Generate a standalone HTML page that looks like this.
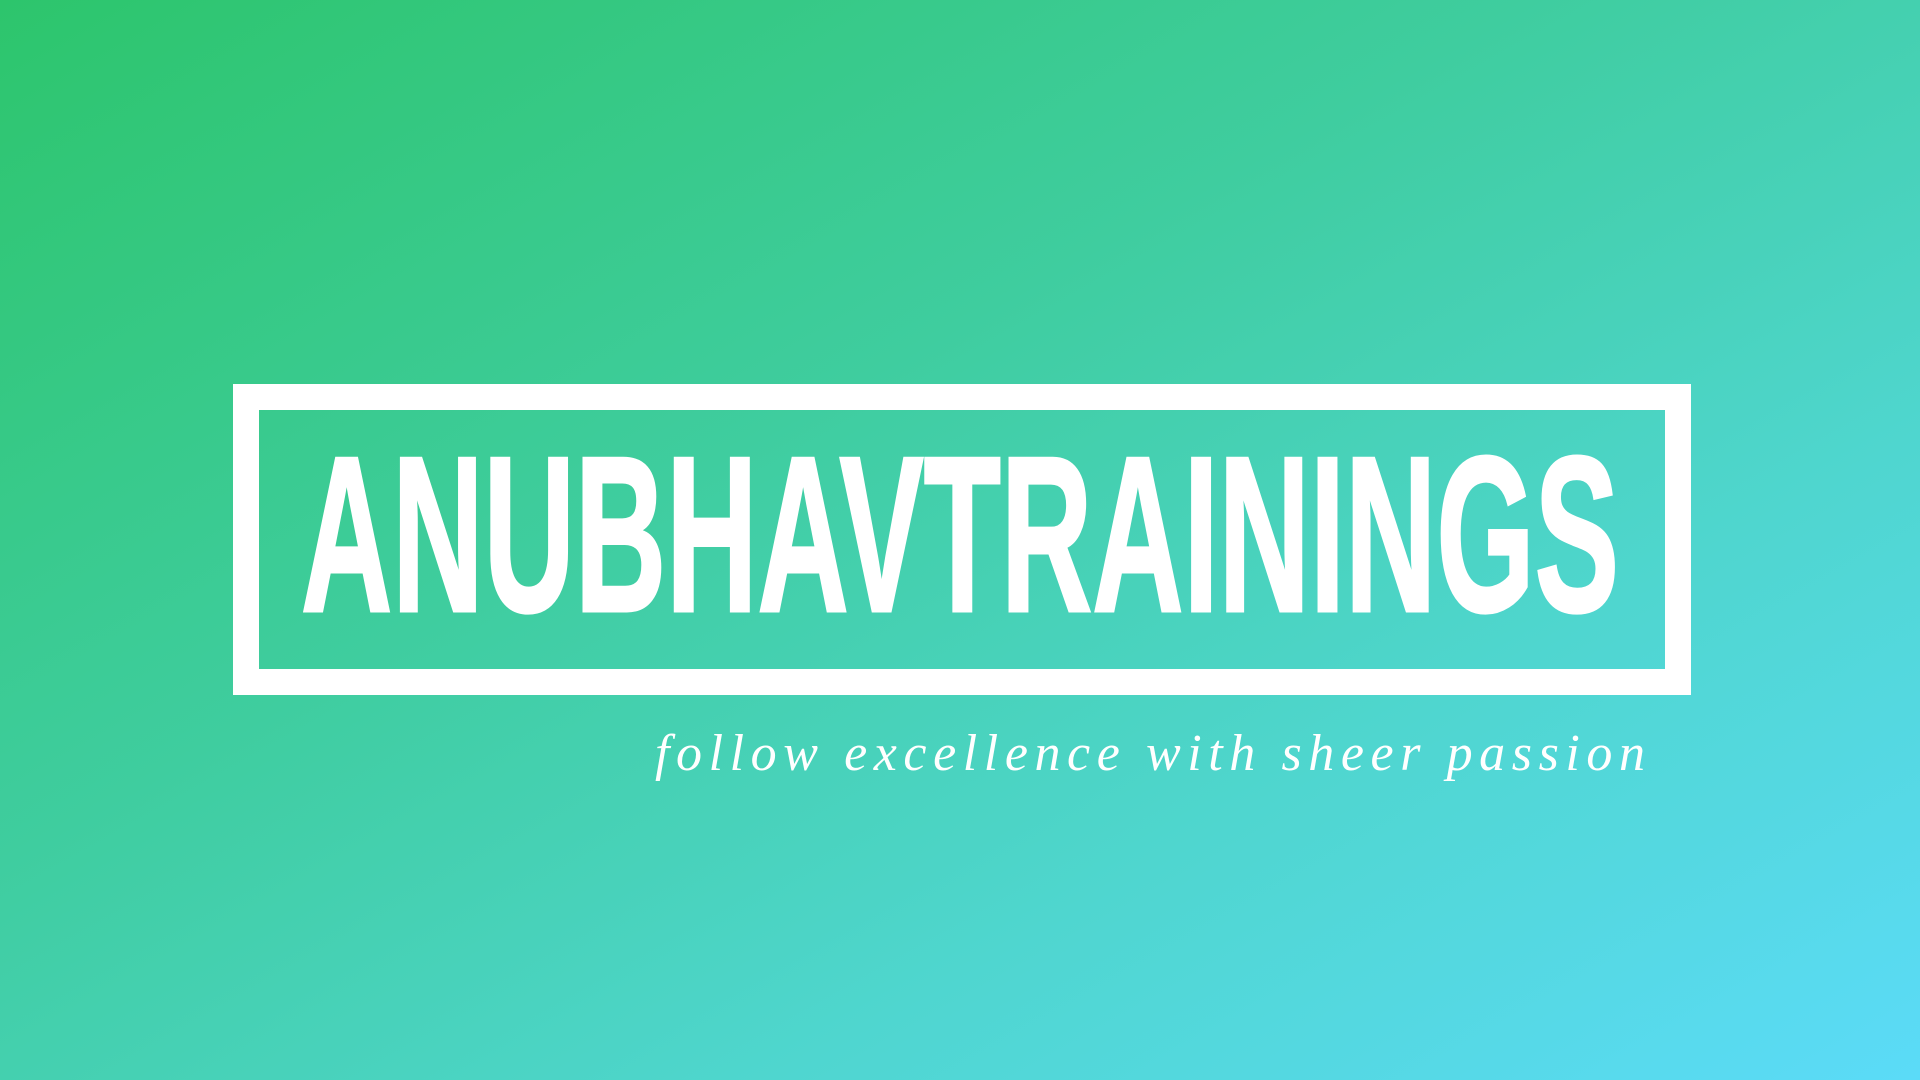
<!DOCTYPE html>
<html><head><meta charset="utf-8"><style>
html,body{margin:0;padding:0;width:1920px;height:1080px;overflow:hidden}
body{background:linear-gradient(to bottom right,#2dc56c 0%,#3fcd9f 40%,#4fd6cf 70%,#5bdbf8 100%)}
</style></head><body>
<svg width="1920" height="1080" viewBox="0 0 1920 1080" style="position:absolute;left:0;top:0">
<rect x="246" y="397" width="1432" height="285" fill="none" stroke="#fff" stroke-width="26"/>
<text x="301" y="611" font-family="Liberation Sans, sans-serif" font-weight="bold" font-size="222" fill="#fff" stroke="#fff" stroke-width="3" textLength="1318" lengthAdjust="spacingAndGlyphs">ANUBHAVTRAININGS</text>
<text x="655" y="770" font-family="Liberation Serif, serif" font-style="italic" font-size="52" fill="#fff" textLength="1000" lengthAdjust="spacing" letter-spacing="10">follow excellence with sheer passion</text>
</svg>
</body></html>
